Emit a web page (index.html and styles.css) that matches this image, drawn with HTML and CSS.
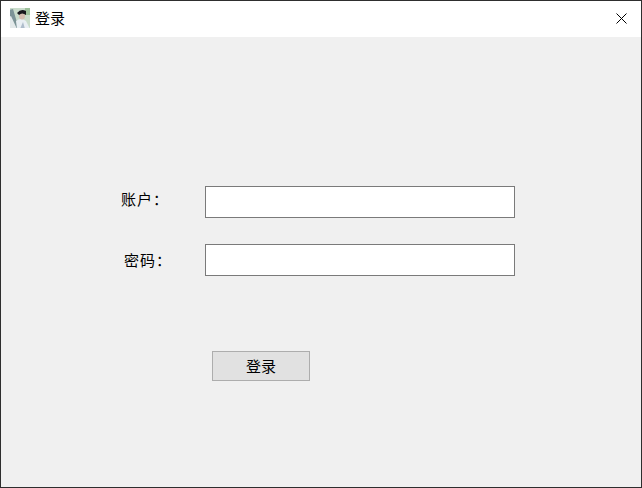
FILE: index.html
```html
<!DOCTYPE html>
<html lang="zh-CN">
<head>
    <meta charset="UTF-8">
    <meta name="viewport" content="width=device-width, initial-scale=1.0">
    <title>登录</title>
    <link rel="stylesheet" href="styles.css">
</head>
<body>
    <div class="window">
        <div class="titlebar">
            <svg class="app-icon" width="20" height="20" viewBox="0 0 20 20">
                <defs>
                    <filter id="soft"><feGaussianBlur stdDeviation="0.5"/></filter>
                </defs>
                <rect width="20" height="20" fill="#c9dccb"/>
                <g filter="url(#soft)">
                    <rect x="15" y="-1" width="6" height="8" fill="#9cc09a"/>
                    <path d="M-1 2L3 1L9 21H-1Z" fill="#7b9396"/>
                    <path d="M1 8L7 21H-1V9Z" fill="#e3e9ea"/>
                    <path d="M6 13Q11 9 16 13L20 21H7Z" fill="#e9eff3"/>
                    <path d="M13 14L15 21H10Z" fill="#aebccb"/>
                    <ellipse cx="12" cy="8" rx="3" ry="3.5" fill="#d3bbae"/>
                    <path d="M7 5Q11 0 16 3L16 7Q12 4 9 7Z" fill="#14171b"/>
                </g>
            </svg>
            <span class="title-text">登录</span>
            <svg class="close-icon" width="11" height="11" viewBox="0 0 11 11">
                <path d="M0.5 0.5L10.5 10.5M10.5 0.5L0.5 10.5" stroke="#000" stroke-width="1" fill="none"/>
            </svg>
        </div>
        <div class="content">
            <div class="form-row row-account">
                <label class="field-label" for="account">账户：</label>
                <input class="field-input" id="account" type="text">
            </div>
            <div class="form-row row-password">
                <label class="field-label" for="password">密码：</label>
                <input class="field-input" id="password" type="password">
            </div>
            <button class="login-btn">登录</button>
        </div>
    </div>
</body>
</html>
```

FILE: styles.css
```css
html, body {
    margin: 0;
    padding: 0;
}

body {
    font-family: "Noto Sans CJK SC", "Liberation Sans", sans-serif;
    font-size: 14px;
    color: #000;
    background-color: #f0f0f0;
}

.window {
    box-sizing: border-box;
    width: 642px;
    height: 488px;
    border: 1px solid #2e2e2e;
    background-color: #f0f0f0;
    overflow: hidden;
}

.titlebar {
    box-sizing: border-box;
    display: flex;
    align-items: center;
    height: 36px;
    padding: 0 14px 2px 9px;
    background-color: #fff;
}

.app-icon {
    flex: none;
}

.title-text {
    margin: 0 0 2px 5px;
    font-size: 15px;
}

.close-icon {
    margin-left: auto;
}

.content {
    padding-top: 149px;
}

.form-row {
    display: flex;
    align-items: center;
    height: 32px;
    margin-bottom: 26px;
}

.row-account {
    padding-left: 120px;
}

.row-password {
    padding-left: 123px;
}

.field-label {
    flex: none;
    font-family: "Noto Sans CJK TC", "Noto Sans CJK SC", sans-serif;
    font-size: 15px;
    letter-spacing: 1px;
}

.row-account .field-label {
    width: 84px;
    margin-bottom: 8px;
}

.row-password .field-label {
    width: 81px;
    margin-bottom: 1px;
}

.field-input {
    box-sizing: border-box;
    width: 310px;
    height: 32px;
    margin: 0;
    padding: 0 4px;
    border: 1px solid #7a7a7a;
    background-color: #fff;
    outline: none;
}

.login-btn {
    display: block;
    box-sizing: border-box;
    width: 98px;
    height: 30px;
    margin: 75px 0 0 211px;
    padding: 0 0 2px;
    border: 1px solid #adadad;
    background-color: #e1e1e1;
    font-family: inherit;
    font-size: 15px;
    color: #000;
}
```
